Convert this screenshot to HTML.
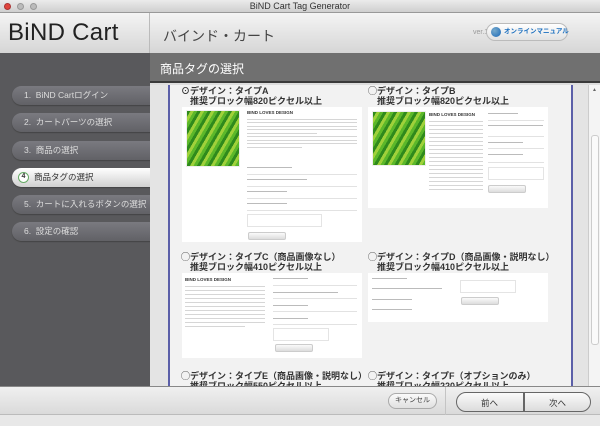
<!DOCTYPE html>
<html><head><meta charset="utf-8"><style>
*{margin:0;padding:0;box-sizing:border-box}
body{width:600px;height:426px;overflow:hidden;font-family:"Liberation Sans","Noto Sans CJK JP",sans-serif;background:#ddd;position:relative}
.a{position:absolute}
.tb{left:0;top:0;width:600px;height:13px;background:linear-gradient(#ebebeb,#cfcfcf);border-bottom:1px solid #999;font-size:9px;text-align:center;line-height:13px;color:#333}
.dot{position:absolute;top:3px;width:7px;height:7px;border-radius:50%;background:#bbb;border:1px solid #999}
.hdr{top:13px;height:40px;background:linear-gradient(#f4f4f4,#d6d6d6)}
.side{left:0;top:53px;width:150px;height:333px;background:#59595c}
.pill{position:absolute;left:12px;width:140px;height:19px;border-radius:10px 0 0 10px;background:linear-gradient(#7a7a80,#616166);color:#ddd;font-size:8.5px;line-height:19px;padding-left:12px;box-shadow:0 1px 1px #444}
.pill.on{background:linear-gradient(#fff,#d0d0d0);color:#333;padding-left:22px}
.line{height:1px;background:#e2e2e2;position:absolute}
.txt{position:absolute;height:1px;background:#d6d6d6}
.card{position:absolute;background:#fff}
.h{position:absolute;font-size:9px;line-height:10px;font-weight:bold;color:#333;white-space:nowrap}
.box{position:absolute;background:repeating-linear-gradient(120deg,#2f8a1c 0 3px,#9fd13a 3px 6px,#5cb82a 6px 9px);border:1px solid #eee}
.btn{position:absolute;height:8px;border-radius:2px;background:linear-gradient(#fafafa,#ddd);border:1px solid #ccc}
</style></head><body>
<div class="a tb">BiND Cart Tag Generator
<div class="dot" style="left:4px;background:#e0453c;border-color:#a33"></div><div class="dot" style="left:17px"></div><div class="dot" style="left:30px"></div></div>
<div class="a hdr" style="left:0;width:150px;border-right:1px solid #bbb"></div>
<div class="a" style="left:8px;top:19px;font-size:24px;color:#222;letter-spacing:0.3px">BiND Cart</div>
<div class="a hdr" style="left:150px;width:450px"></div>
<div class="a" style="left:163px;top:26px;font-size:14px;color:#444">バインド・カート</div>
<div class="a" style="left:473px;top:29px;font-size:7px;color:#999">ver.1.0</div>
<div class="a" style="left:486px;top:23px;width:82px;height:18px;border-radius:9px;background:linear-gradient(#fff,#e2e2e2);border:1px solid #bbb;font-size:6.5px;font-weight:bold;color:#1b6fbf;line-height:16px;padding-left:17px;white-space:nowrap">オンラインマニュアル<div class="a" style="left:4px;top:3px;width:10px;height:10px;border-radius:50%;background:radial-gradient(circle at 35% 35%,#7ac,#1867b8)"></div></div>
<div class="a" style="left:150px;top:53px;width:450px;height:30px;background:#707070;border-bottom:2px solid #3a3a3a"></div>
<div class="a" style="left:160px;top:60px;font-size:12px;color:#fff">商品タグの選択</div>
<div class="a side"></div>
<div class="pill" style="top:86px">1.&nbsp; BiND Cartログイン</div>
<div class="pill" style="top:113px">2.&nbsp; カートパーツの選択</div>
<div class="pill" style="top:141px">3.&nbsp; 商品の選択</div>
<div class="pill on" style="top:168px">商品タグの選択<div class="a" style="left:6px;top:4px;width:11px;height:11px;border-radius:50%;background:#fff;border:1.5px solid #6a6;font-size:7px;line-height:8px;text-align:center;font-weight:bold">4</div></div>
<div class="pill" style="top:195px">5.&nbsp; カートに入れるボタンの選択</div>
<div class="pill" style="top:222px">6.&nbsp; 設定の確認</div>
<div class="a" style="left:150px;top:85px;width:450px;height:301px;background:#e4e4e4;overflow:hidden">
<div class="a" style="left:18px;top:0;width:405px;height:301px;background:#f2f2f2;border-left:2px solid #5b5fa8;border-right:2px solid #5b5fa8"></div>
<div class="a" style="left:438px;top:0;width:12px;height:301px;background:#f4f4f4;border-left:1px solid #ccc"><div class="a" style="left:2px;top:50px;width:8px;height:210px;background:#fafafa;border:1px solid #ccc;border-radius:3px"></div><div class="a" style="left:3px;top:2px;font-size:5px;color:#666">▲</div></div>
</div>
<div class="h" style="left:181px;top:86px">⊙デザイン：タイプA</div>
<div class="h" style="left:190px;top:96px">推奨ブロック幅820ピクセル以上</div>
<div class="h" style="left:368px;top:86px">◯デザイン：タイプB</div>
<div class="h" style="left:377px;top:96px">推奨ブロック幅820ピクセル以上</div>
<div class="card" style="left:182px;top:107px;width:180px;height:135px"></div>
<div class="box" style="left:186px;top:110px;width:54px;height:57px"></div>
<div class="a" style="left:247px;top:110px;font-size:4.5px;color:#333;font-weight:bold">BIND LOVES DESIGN</div>
<div class="txt" style="left:247px;top:119px;width:110px"></div><div class="txt" style="left:247px;top:122px;width:110px"></div><div class="txt" style="left:247px;top:126px;width:110px"></div><div class="txt" style="left:247px;top:129px;width:110px"></div><div class="txt" style="left:247px;top:133px;width:70px"></div><div class="txt" style="left:247px;top:136px;width:110px"></div><div class="txt" style="left:247px;top:140px;width:110px"></div><div class="txt" style="left:247px;top:143px;width:110px"></div><div class="txt" style="left:247px;top:147px;width:55px"></div>
<div class="txt" style="left:247px;top:167px;width:45px;background:#bbb"></div><div class="line" style="left:247px;top:174px;width:110px"></div>
<div class="txt" style="left:247px;top:179px;width:60px;background:#bbb"></div><div class="line" style="left:247px;top:186px;width:110px"></div>
<div class="txt" style="left:247px;top:191px;width:40px;background:#bbb"></div><div class="line" style="left:247px;top:198px;width:110px"></div>
<div class="txt" style="left:247px;top:203px;width:40px;background:#bbb"></div><div class="line" style="left:247px;top:210px;width:110px"></div>
<div class="a" style="left:247px;top:214px;width:75px;height:13px;border:1px solid #e4e4e4"></div>
<div class="btn" style="left:248px;top:232px;width:38px"></div>
<div class="card" style="left:368px;top:107px;width:180px;height:101px"></div>
<div class="box" style="left:372px;top:111px;width:54px;height:55px"></div>
<div class="a" style="left:429px;top:112px;font-size:4.5px;color:#333;font-weight:bold">BIND LOVES DESIGN</div>
<div class="txt" style="left:429px;top:121px;width:54px"></div><div class="txt" style="left:429px;top:125px;width:54px"></div><div class="txt" style="left:429px;top:129px;width:54px"></div><div class="txt" style="left:429px;top:133px;width:54px"></div><div class="txt" style="left:429px;top:137px;width:54px"></div><div class="txt" style="left:429px;top:141px;width:54px"></div><div class="txt" style="left:429px;top:145px;width:54px"></div><div class="txt" style="left:429px;top:149px;width:54px"></div><div class="txt" style="left:429px;top:153px;width:54px"></div><div class="txt" style="left:429px;top:157px;width:54px"></div><div class="txt" style="left:429px;top:161px;width:54px"></div><div class="txt" style="left:429px;top:165px;width:54px"></div><div class="txt" style="left:429px;top:169px;width:54px"></div><div class="txt" style="left:429px;top:173px;width:54px"></div><div class="txt" style="left:429px;top:177px;width:54px"></div><div class="txt" style="left:429px;top:181px;width:54px"></div><div class="txt" style="left:429px;top:185px;width:54px"></div><div class="txt" style="left:429px;top:189px;width:54px"></div>
<div class="txt" style="left:488px;top:113px;width:30px;background:#bbb"></div><div class="line" style="left:488px;top:120px;width:56px"></div>
<div class="txt" style="left:488px;top:125px;width:55px;background:#bbb"></div><div class="line" style="left:488px;top:136px;width:56px"></div>
<div class="txt" style="left:488px;top:142px;width:35px;background:#bbb"></div><div class="line" style="left:488px;top:148px;width:56px"></div>
<div class="txt" style="left:488px;top:154px;width:35px;background:#bbb"></div><div class="line" style="left:488px;top:162px;width:56px"></div>
<div class="a" style="left:488px;top:167px;width:56px;height:13px;border:1px solid #e4e4e4"></div>
<div class="btn" style="left:488px;top:185px;width:38px"></div>
<div class="h" style="left:181px;top:252px">◯デザイン：タイプC（商品画像なし）</div>
<div class="h" style="left:190px;top:262px">推奨ブロック幅410ピクセル以上</div>
<div class="h" style="left:368px;top:252px">◯デザイン：タイプD（商品画像・説明なし）</div>
<div class="h" style="left:377px;top:262px">推奨ブロック幅410ピクセル以上</div>
<div class="card" style="left:182px;top:273px;width:180px;height:85px"></div>
<div class="a" style="left:185px;top:277px;font-size:4.5px;color:#333;font-weight:bold">BIND LOVES DESIGN</div>
<div class="txt" style="left:185px;top:286px;width:80px"></div><div class="txt" style="left:185px;top:290px;width:80px"></div><div class="txt" style="left:185px;top:294px;width:80px"></div><div class="txt" style="left:185px;top:298px;width:80px"></div><div class="txt" style="left:185px;top:302px;width:80px"></div><div class="txt" style="left:185px;top:306px;width:80px"></div><div class="txt" style="left:185px;top:310px;width:80px"></div><div class="txt" style="left:185px;top:314px;width:80px"></div><div class="txt" style="left:185px;top:318px;width:80px"></div><div class="txt" style="left:185px;top:322px;width:80px"></div><div class="txt" style="left:185px;top:326px;width:60px"></div>
<div class="txt" style="left:273px;top:278px;width:35px;background:#bbb"></div><div class="line" style="left:273px;top:285px;width:84px"></div>
<div class="txt" style="left:273px;top:292px;width:65px;background:#bbb"></div><div class="line" style="left:273px;top:298px;width:84px"></div>
<div class="txt" style="left:273px;top:305px;width:35px;background:#bbb"></div><div class="line" style="left:273px;top:311px;width:84px"></div>
<div class="txt" style="left:273px;top:318px;width:35px;background:#bbb"></div><div class="line" style="left:273px;top:324px;width:84px"></div>
<div class="a" style="left:273px;top:328px;width:56px;height:13px;border:1px solid #e4e4e4"></div>
<div class="btn" style="left:275px;top:344px;width:38px"></div>
<div class="card" style="left:368px;top:273px;width:180px;height:49px"></div>
<div class="txt" style="left:372px;top:278px;width:35px;background:#bbb"></div>
<div class="txt" style="left:372px;top:288px;width:70px;background:#bbb"></div>
<div class="txt" style="left:372px;top:299px;width:40px;background:#bbb"></div>
<div class="txt" style="left:372px;top:309px;width:40px;background:#bbb"></div>
<div class="a" style="left:460px;top:280px;width:56px;height:13px;border:1px solid #e4e4e4"></div>
<div class="btn" style="left:461px;top:297px;width:38px"></div>
<div class="h" style="left:181px;top:371px">◯デザイン：タイプE（商品画像・説明なし）</div>
<div class="h" style="left:190px;top:381px">推奨ブロック幅550ピクセル以上</div>
<div class="h" style="left:368px;top:371px">◯デザイン：タイプF（オプションのみ）</div>
<div class="h" style="left:377px;top:381px">推奨ブロック幅220ピクセル以上</div>
<div class="a" style="left:0;top:386px;width:600px;height:29px;background:linear-gradient(#f0f0f0,#dadada);border-top:1px solid #888;border-bottom:1px solid #bbb"></div>
<div class="a" style="left:0;top:415px;width:600px;height:11px;background:#e8e8e8"></div>
<div class="a" style="left:445px;top:387px;width:1px;height:28px;background:#c4c4c4"></div>
<div class="a" style="left:388px;top:393px;width:49px;height:16px;border-radius:8px;border:1px solid #aaa;background:linear-gradient(#fafafa,#e0e0e0);font-size:7px;text-align:center;line-height:14px;color:#444">キャンセル</div>
<div class="a" style="left:456px;top:392px;width:135px;height:20px;border-radius:10px;border:1.5px solid #666;background:linear-gradient(#fafafa,#dcdcdc)"></div>
<div class="a" style="left:523px;top:392px;width:1.5px;height:20px;background:#666"></div>
<div class="a" style="left:456px;top:397px;width:67px;text-align:center;font-size:8.5px;color:#333">前へ</div>
<div class="a" style="left:524px;top:397px;width:67px;text-align:center;font-size:8.5px;color:#333">次へ</div>
</body></html>
